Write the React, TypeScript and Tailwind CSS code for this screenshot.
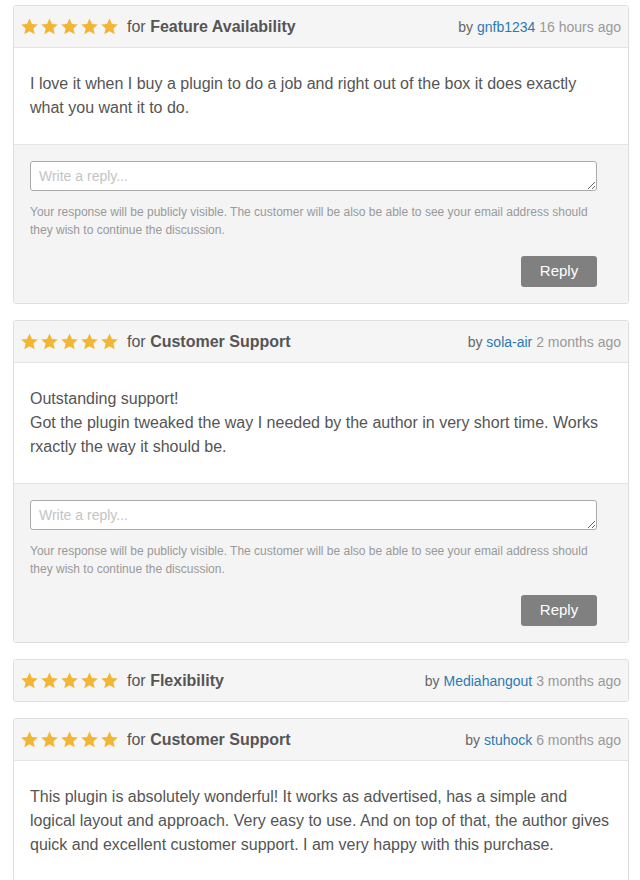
import React from 'react'

type Review = {
  topic: string
  author: string
  when: string
  body?: string[]
  reply?: boolean
}

const reviews: Review[] = [
  {
    topic: 'Feature Availability',
    author: 'gnfb1234',
    when: '16 hours ago',
    body: ['I love it when I buy a plugin to do a job and right out of the box it does exactly what you want it to do.'],
    reply: true,
  },
  {
    topic: 'Customer Support',
    author: 'sola-air',
    when: '2 months ago',
    body: [
      'Outstanding support!',
      'Got the plugin tweaked the way I needed by the author in very short time. Works rxactly the way it should be.',
    ],
    reply: true,
  },
  { topic: 'Flexibility', author: 'Mediahangout', when: '3 months ago' },
  {
    topic: 'Customer Support',
    author: 'stuhock',
    when: '6 months ago',
    body: [
      'This plugin is absolutely wonderful! It works as advertised, has a simple and logical layout and approach. Very easy to use. And on top of that, the author gives quick and excellent customer support. I am very happy with this purchase.',
    ],
  },
]

function Star() {
  return (
    <svg viewBox="0 0 24 24" className="w-[19px] h-[19px]" fill="#f2b632">
      <path d="M12 1.8l3.1 6.9 7.4.7-5.6 5 1.7 7.4L12 18l-6.6 3.8 1.7-7.4-5.6-5 7.4-.7z" />
    </svg>
  )
}

function ReviewCard({ review }: { review: Review }) {
  return (
    <div className="border border-[#dedede] rounded-[3px] overflow-hidden">
      {/* header */}
      <div className="h-[41px] bg-[#f5f5f5] flex items-center justify-between pl-[6px] pr-[7px]">
        <div className="flex items-center">
          <div className="flex items-center gap-[1px]">
            {[0, 1, 2, 3, 4].map((i) => (
              <Star key={i} />
            ))}
          </div>
          <span className="ml-[8px] text-base text-[#555]">
            for <b className="font-bold">{review.topic}</b>
          </span>
        </div>
        <div className="text-sm text-[#999]">
          <span className="text-[#666]">by </span>
          <a href="#" className="text-[#2a7ab2]">{review.author}</a> {review.when}
        </div>
      </div>

      {review.body && (
        <div className="border-t border-[#e4e4e4] bg-white px-4 pt-[24px] pb-[24px] text-base leading-6 text-[#555]">
          {review.body.map((line, i) => (
            <p key={i}>{line}</p>
          ))}
        </div>
      )}

      {review.reply && (
        <div className="border-t border-[#e4e4e4] bg-[#f4f4f4] pl-4 pr-[31px] pt-4 pb-[16px]">
          <textarea
            rows={1}
            placeholder="Write a reply..."
            className="block w-full h-[30px] border border-[#aaa] rounded-[3px] bg-white px-2 py-[4px] text-sm leading-5 text-[#555] placeholder:text-[#c4c4c4] outline-none"
          />
          <p className="mt-3 text-xs leading-[18px] text-[#999]">
            Your response will be publicly visible. The customer will be also be able to see your email address should
            they wish to continue the discussion.
          </p>
          <div className="mt-[17px] flex justify-end">
            <button className="w-[76px] h-[31px] rounded-[3px] bg-[#808080] text-white text-[15px]">Reply</button>
          </div>
        </div>
      )}
    </div>
  )
}

export default function App() {
  return (
    <div className="min-h-[880px] bg-white pt-[5px] pl-[13px] pr-[11px] font-['Liberation_Sans',Arial,sans-serif]">
      <div className="flex flex-col gap-4">
        {reviews.map((r, i) => (
          <ReviewCard key={i} review={r} />
        ))}
      </div>
    </div>
  )
}
